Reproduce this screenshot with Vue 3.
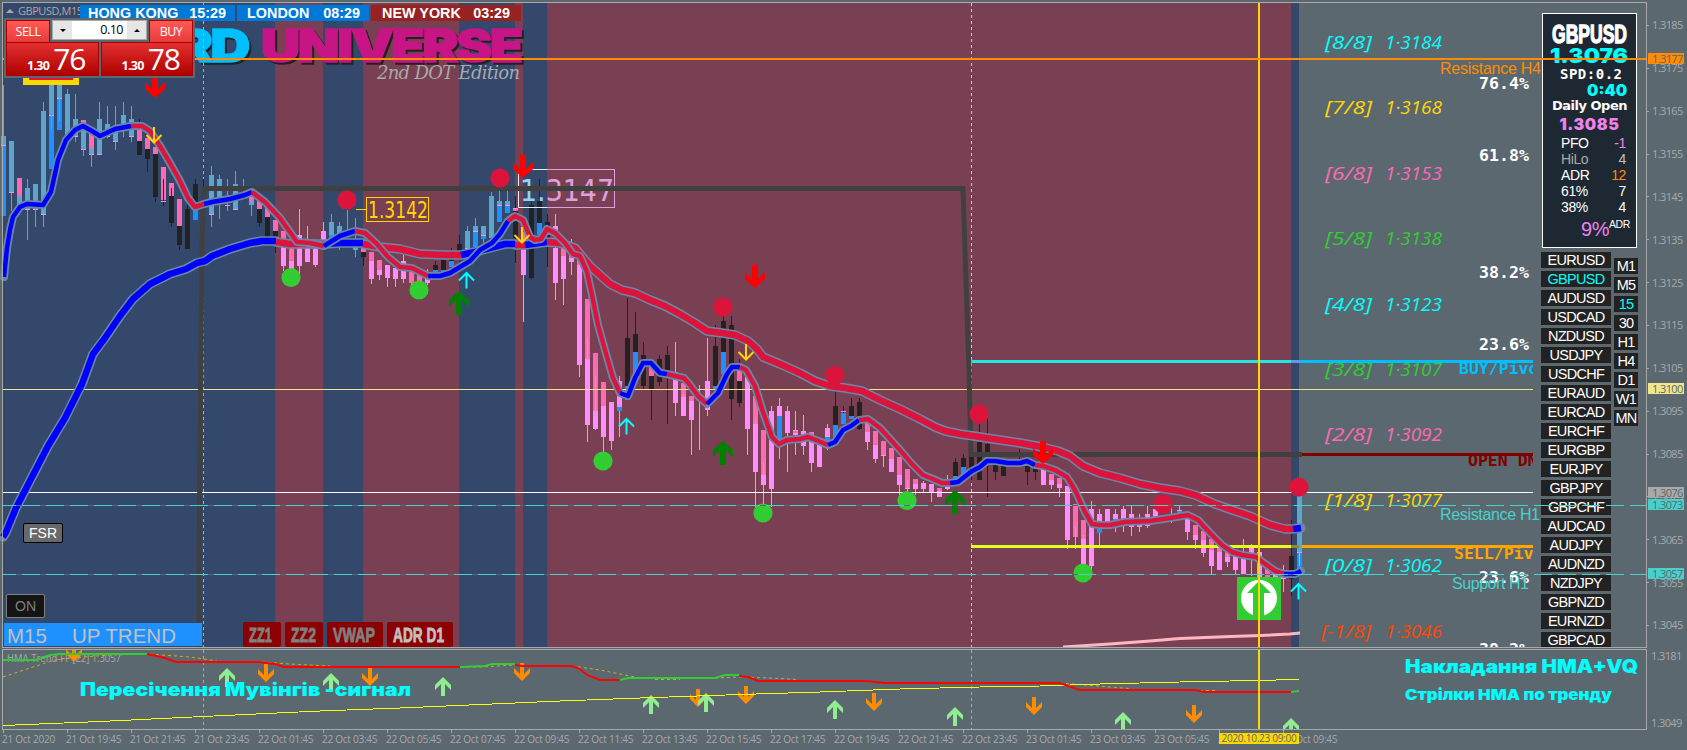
<script setup>
// candle spacing is 8px, each entry is one bar: lowercase = body, uppercase = wick
const rawCandles = `
s136-145 d145-216 v145-146 S85-136/s141-192 v192-193 S193-211/p178-196 s196-206 S206-215/S179-240 s188-209 v209-210/s184-209 v209-210 S209-227/
S102-227 s111-214 v214-215/s85-115 d115-169 v115-116 S115-130/s85-98 d98-130 v98-99 S98-121/S89-142 s94-138/S94-142 s119-136 v136-137/
p120-123 s131-149 v149-150 S149-156/p132-149 s149-154 v154-155 S154-167/S102-155 s119-154 v154-155/S106-138 s124-137 v136-137/S106-150 s132-141 v141-142/
S102-137 s115-131/S106-142 s119-136 v136-137/K119-155 p127-141 k141-155/K149-172 p138-149 k149-159/K149-202 p147-154 k154-197/
p167-200 K179-206 v201-202/p183-196 k196-223 K188-227/p199-226 k226-245 K226-250/K205-249 k209-249/K179-210 k184-204 d210-220/
K179-210/S166-227 s175-200 s206-214 v214-215/S175-219 s179-200/S179-211 v205-206/S171-210 s184-209 v209-210/
S179-195/p195-201 s201-205 S205-216/p201-209 k209-223 K209-227/p207-217 k217-237/p220-231 k231-237 K231-253/
p231-242 v242-266 V266-271/V238-275 p240-261 v261-270/V209-278 v235-266/V226-262 v240-262/v240-265 V265-267/
V222-240 v231-240/S214-240 s222-235 d235-240/S222-250 s226-235 v235-236/S210-235 d230-235/S218-257 s240-250/
K245-266 p245-252 k252-257/p252-261 v261-279 V279-284/p260-270 v270-275 V275-280/v265-278 V278-287/v268-279 V279-287/
V255-283 v261-264 v271-279/p272-283 V283-288/p275-285/V269-285 v278-283/K261-275 k265-270 d270-272/
K252-270 k260-270 d270-273/K248-270 k252-261 d261-267/K235-260 k244-251/S226-249 s231-248 v248-249/S218-247 s226-231 d231-247 v231-232/
S226-243 s226-235 d236-239 v235-236/S192-240 s196-238/S190-222 s201-205 d205-222 v205-206/S190-213 s201-205 d205-213 v205-206/K196-263 p208-211 k211-238 v208-209/
V232-322 p232-250 v250-275/K200-279 k205-278/K179-236 k201-223 d223-235/K214-267 k222-240/V214-300 v226-230 v248-283/
V240-305 p248-256 v256-279/V239-275 p250-258 v258-262/V262-377 p260-265 v265-365/p299-359 v359-425 V338-442/p353-411 v411-429 V376-430/
p382-406 v406-437 V437-455/v402-441 V441-450/V376-437 v381-407 d407-411/K298-400 k338-386 d386-400/K312-375 k334-352 d352-375/
K342-390 k355-386/p363-376 k376-389 K376-420/K355-386 k359-382/K346-424 k355-371/V342-416 v372-403/
p383-397 v397-416 V394-416/p396-401 v401-420 V401-455/V385-450/V338-416 v381-410/K325-390 k346-386 d386-390/
K315-374 k321-352 d352-374/K316-420 k325-399/K359-407 p371-381 k381-403/v377-429 V429-455/p396-424 v424-472 V419-507/
p430-475 v475-485 V462-507/V406-507 v411-489/V398-459 v406-416 d416-440/V406-472 v411-433/V411-455 v430-435 p431-433/
V415-455 v431-446/p432-440 v440-463 V463-472/v445-467/V424-450 v428-437 d437-441/K390-437 k406-425 d425-437/
K406-424 v411-412 d413-424/K398-419 k406-416 d416-419/K398-430 k402-429/p422-432 v432-442 V442-450/p431-445 v445-459 V459-463/
p441-455 v455-456 V455-467/p448-459 v459-472/p457-475 v475-485 V485-495/p469-488 v488-489 V479-492/p479-484 v484-489 V489-495/
V481-493 v483-489/v484-493 V484-502/p488-491 v491-497/V475-490 v487-489/K458-480 k462-476 d476-480/
K454-475 k458-467 d467-475/k455-470 K470-480/K424-480 k442-480/K418-497 k444-455/k463-472 K472-480/
k465-476//K449-460/K457-485 k465-472/K467-480 k467-472/
v468-485/p474-480 v480-485 V485-489/p478-484 v484-488 V488-497/v486-540 V540-549/p504-537 V526-549/
p520-539 v539-565 V535-570/V501-573 v509-566/V509-545 v514-523 d529-533/v509-523/V509-532 v514-520 d519-521/
V505-532 v509-520/V505-536 v514-527/V514-532 v524-527/V505-528 v514-526/v509-523/
V515-523/V508-523/V505-514 v510-511 d511-514/v518-532 V532-540/p525-535 v535-540 V535-549/
p531-540 v540-553 V553-557/p539-550 v550-566 V566-575/p547-552 v552-570/p552-557 v557-562 V550-567/v552-570 V570-574/
V539-575 v555-574/V544-576 v548-553/v552-577/p566-577/v574-578/
V565-592 v576-579/K520-596 k556-579/s480-552 d552-570 v552-553 V553-566`

const fills = { s: '#5fa6cc', d: '#1e90ff', k: '#222222', p: '#ff69b4', v: '#ff8cff' }
const candles = []
rawCandles.replace(/\n/g, '').split('/').forEach((bar, i) => {
  bar.split(' ').filter(Boolean).forEach(t => {
    const [a, b] = t.slice(1).split('-').map(Number)
    const wick = t[0] < 'a'
    candles.push({ x: 3 + i * 8 - (wick ? 0 : 2), y: a, w: wick ? 1 : 5, h: b - a, fill: fills[t[0].toLowerCase()] })
  })
})

const bands = [
  [3, 275, 'b'], [275, 323, 'm'], [323, 363, 'b'], [363, 459, 'm'], [459, 515, 'b'],
  [515, 523, 'm'], [523, 547, 'b'], [547, 1291, 'm'], [1291, 1299, 'b']
]

// slow and fast moving averages, split where the colour flips
const slow = [
  ['b', '3,537 6,532 16,508 32,477 48,446 65,418 82,384 93,354 105,338 120,316 133,299 150,284 170,274 186,269 197,263 205,261 212,256 230,249 250,243 262,241 276,241'],
  ['r', '276,242 290,244 325,244'], ['b', '325,244 340,243 363,243'],
  ['r', '363,244 380,247 400,249 420,254 445,255 461,255'], ['b', '461,255 475,252 490,248 505,244 515,244'],
  ['r', '515,245 525,245'], ['b', '525,245 547,242'],
  ['r', '547,242 560,243 575,248 580,254 590,266 600,275 610,284 622,290 635,293 650,300 665,306 680,314 695,323 707,331 722,333 735,335 748,341 757,349 763,357 780,364 800,373 815,381 830,386 845,388 862,391 880,400 900,409 920,419 935,427 945,431 960,434 980,437 1000,440 1020,443 1042,447 1058,451 1070,456 1083,466 1100,473 1120,478 1140,484 1160,488 1180,491 1195,495 1215,504 1232,510 1250,516 1270,525 1285,529 1293,529'],
  ['b', '1293,529 1301,528']
]
const fast = [
  ['b', '4,277 7,248 10,230 13,217 20,207 27,204 43,205 51,192 58,160 66,140 75,130 83,126 92,131 100,136 115,129 131,126'],
  ['r', '131,126 142,126 150,131 160,146 170,163 180,181 188,198 195,207 204,204'],
  ['b', '204,204 212,202 230,199 245,195 252,192'],
  ['r', '252,192 265,202 280,218 297,242 310,243 324,246'],
  ['b', '324,246 340,236 355,231'],
  ['r', '355,231 365,233 377,244 388,257 400,267 412,268 420,272 428,276'],
  ['b', '428,276 440,276 450,273 470,261 480,250 492,243 500,234 508,221'],
  ['r', '508,221 515,216 523,220 530,237 535,240 541,239 547,229 555,233 565,243 573,254 580,256 587,272 592,295 598,325 605,350 613,378 620,393'],
  ['b', '620,393 628,396 635,378 643,363 651,363 660,373 667,374'],
  ['r', '667,374 675,376 684,378 690,385 698,396 707,404'],
  ['b', '707,404 718,393 727,374 732,367 740,367'],
  ['r', '740,367 746,370 755,386 763,412 772,437 779,444 787,440 800,439 808,437 816,440 828,445'],
  ['b', '828,445 835,442 843,430 851,426 859,420'],
  ['r', '859,420 868,419 880,428 900,450 912,464 923,475 933,479 942,483 950,483'],
  ['b', '950,483 958,482 972,471 980,467 987,461 995,461 1008,463 1020,463 1027,461 1035,465'],
  ['r', '1035,465 1043,466 1055,470 1067,477 1075,490 1085,512 1092,524 1100,525 1110,525 1125,522 1150,521 1170,518 1188,515 1198,520 1210,533 1222,545 1232,552 1242,555 1256,557 1264,563 1275,571 1284,574'],
  ['b', '1284,574 1295,574 1301,571']
]
const joined = segs => segs.map(s => s[1]).join(' ')

const dots = [
  [347, 200, 'r'], [500, 178, 'r'], [723, 307, 'r'], [835, 375.5, 'r'], [979, 414, 'r'], [1163, 504, 'r'], [1299, 487, 'r'],
  [291, 277.5, 'g'], [419, 290, 'g'], [603, 461, 'g'], [763, 513, 'g'], [907, 500.5, 'g'], [1083, 573, 'g']
]

// x, y of the arrow tip
const sellArrows = [[155, 98], [523, 178], [755, 288], [1043, 464]]
const buyArrows = [[459, 291], [723, 441], [955, 490]]
const thinDown = [[154, 143], [522, 243], [746, 360]]
const thinUp = [[466.5, 272.5], [626.5, 418.5], [1298.5, 583.5]]
const subDown = [[74, 662], [266, 682], [370, 686], [522, 681], [698, 707], [746, 704], [874, 711], [1034, 715], [1194, 723]]
const subUp = [[227, 668], [331, 673], [443, 677], [651, 695], [706, 693], [835, 700], [955, 707], [1123, 712], [1291, 718]]

const murrey = [
  ['[8/8]', '1·3184', 49, '#00ffff'], ['[7/8]', '1·3168', 114, '#ffd700'], ['[6/8]', '1·3153', 180, '#ff69b4'],
  ['[5/8]', '1·3138', 245, '#32cd32'], ['[4/8]', '1·3123', 311, '#00ffff'], ['[3/8]', '1·3107', 376, '#32cd32'],
  ['[2/8]', '1·3092', 441, '#ff69b4'], ['[1/8]', '1·3077', 507, '#ffd700'], ['[0/8]', '1·3062', 572, '#00ffff'],
  ['[-1/8]', '1·3046', 638, '#ff4500']
]
const fibs = [['76.4%', 89], ['61.8%', 161], ['38.2%', 278], ['23.6%', 350], ['23.6%', 583], ['38.2%', 655]]

const sessions = [
  { city: 'HONG KONG', time: '15:29', cls: 'hk' },
  { city: 'LONDON', time: '08:29', cls: 'ldn' },
  { city: 'NEW YORK', time: '03:29', cls: 'ny' }
]
const tools = [
  { name: 'ZZ1', w: 38, t: 23 }, { name: 'ZZ2', w: 38, t: 25 },
  { name: 'VWAP', w: 56, t: 42 }, { name: 'ADR D1', w: 66, t: 51, on: true }
]
const stats = [
  ['PFO', '-1', '#fff', '#ee82ee'], ['HiLo', '4', '#a9a9a9', '#c0c0c0'], ['ADR', '12', '#fff', '#ff8c00'],
  ['61%', '7', '#fff', '#fff'], ['38%', '4', '#fff', '#fff']
]
const symbols = ['EURUSD', 'GBPUSD', 'AUDUSD', 'USDCAD', 'NZDUSD', 'USDJPY', 'USDCHF', 'EURAUD', 'EURCAD', 'EURCHF', 'EURGBP',
  'EURJPY', 'GBPJPY', 'GBPCHF', 'AUDCAD', 'AUDJPY', 'AUDNZD', 'NZDJPY', 'GBPNZD', 'EURNZD', 'GBPCAD']
const frames = ['M1', 'M5', '15', '30', 'H1', 'H4', 'D1', 'W1', 'MN']
const prices = ['1.3185', '1.3175', '1.3165', '1.3155', '1.3145', '1.3135', '1.3125', '1.3115', '1.3105', '1.3095', '1.3085', '1.3075', '1.3065', '1.3055', '1.3045']
const tags = [
  { p: '1.3177', cls: 'orange' }, { p: '1.3100', cls: 'khaki' }, { p: '1.3076', cls: 'silver' },
  { p: '1.3073', cls: 'teal1' }, { p: '1.3057', cls: 'teal2' }
]
const times = ['21 Oct 2020', '21 Oct 19:45', '21 Oct 21:45', '21 Oct 23:45', '22 Oct 01:45', '22 Oct 03:45', '22 Oct 05:45',
  '22 Oct 07:45', '22 Oct 09:45', '22 Oct 11:45', '22 Oct 13:45', '22 Oct 15:45', '22 Oct 17:45', '22 Oct 19:45', '22 Oct 21:45',
  '22 Oct 23:45', '23 Oct 01:45', '23 Oct 03:45', '23 Oct 05:45', '23 Oct 07:45', '23 Oct 09:45']
</script>

<template>
  <div class="terminal">
    <div class="upper">
      <main class="chart">
        <svg class="canvas" width="1646" height="647" viewBox="0 0 1646 647">
          <rect v-for="b in bands" :key="b[0]" :x="b[0]" y="3" :width="b[1] - b[0]" height="644" :class="'band-' + b[2]" />

          <!-- logo text -->
          <g class="logo">
            <text x="178" y="64" textLength="72" lengthAdjust="spacingAndGlyphs" class="sh">RD</text>
            <text x="263" y="64" textLength="260" lengthAdjust="spacingAndGlyphs" class="sh">UNIVERSE</text>
            <text x="176" y="62" textLength="72" lengthAdjust="spacingAndGlyphs" class="cy">RD</text>
            <text x="261" y="62" textLength="260" lengthAdjust="spacingAndGlyphs" class="mg">UNIVERSE</text>
          </g>
          <text x="377" y="79" textLength="143" class="edition">2nd DOT Edition</text>

          <path d="M203.5 3V647" class="sep plum" />
          <path d="M971.5 3V647" class="sep lime" />

          <g shape-rendering="crispEdges">
            <rect v-for="(c, i) in candles" :key="i" :x="c.x" :y="c.y" :width="c.w" :height="c.h" :fill="c.fill" />
          </g>

          <!-- price boxes -->
          <rect x="23" y="70" width="56" height="15" fill="#ffd700" />
          <rect x="29" y="70" width="44" height="10" fill="#dc143c" />
          <rect x="366.5" y="197.5" width="62" height="24" class="box gold" />
          <path d="M356 209.5H366" class="box gold" />
          <text x="368" y="218" textLength="60" lengthAdjust="spacingAndGlyphs" class="boxed gold-t">1.3142</text>
          <rect x="518.5" y="169.5" width="96" height="38" class="box plum-b" />
          <path d="M547 169.5H518.5V207.5H547" class="box pale" />
          <text x="520" y="201" textLength="94" lengthAdjust="spacingAndGlyphs" class="boxed big"><tspan fill="#8fd8e8">1.</tspan>3147</text>

          <polyline points="3,389.5 1533,389.5" stroke="#f0e68c" class="ln" />
          <polyline points="3,492.5 1533,492.5" stroke="#fff" class="ln" />

          <polyline points="971,361.5 1291,361.5" stroke="#20e8e0" stroke-width="3" />
          <polyline points="1291,361.5 1299,361.5" stroke="#6c94e0" stroke-width="3" />
          <polyline points="1299,361.5 1533,361.5" stroke="#00bfff" stroke-width="3" />
          <polyline points="971,546.5 1291,546.5" stroke="#dfff20" stroke-width="3" />
          <polyline points="1291,546.5 1299,546.5" stroke="#8a8a30" stroke-width="3" />
          <polyline points="1302,546.5 1533,546.5" stroke="#ffa500" stroke-width="3" />
          <polyline points="1302,454.5 1533,454.5" stroke="#800000" stroke-width="3" />
          <polyline points="1063,647 1110,644 1150,641 1180,638.5 1231,636.5 1260,635.5 1290,634 1300,633" class="pink" />
          <polyline points="199,647 199,562 202,240 204,188.5 963,188.5 965,250 969,370 971,454.5 1302,454.5" class="daily" />

          <polyline :points="joined(slow)" class="edge slow-edge" />
          <polyline v-for="(s, i) in slow" :key="'s' + i" :points="s[1]" :class="['ma', 'slow', 'ma-' + s[0]]" />
          <polyline :points="joined(fast)" class="edge fast-edge" />
          <polyline v-for="(s, i) in fast" :key="'f' + i" :points="s[1]" :class="['ma', 'ma-' + s[0]]" />

          <circle v-for="d in dots" :key="d[0] + '-' + d[1]" :cx="d[0]" :cy="d[1]" r="9.6" :fill="d[2] === 'r' ? '#dc143c' : '#32cd32'" />
          <path v-for="a in sellArrows" :key="'d' + a[0]" :transform="`translate(${a[0]} ${a[1]})`" d="M0 0L10-9V-16L3-9V-23H-3V-9L-10-16V-9Z" fill="#f00" />
          <path v-for="a in buyArrows" :key="'u' + a[0]" :transform="`translate(${a[0]} ${a[1]})`" d="M0 0L10 9V16L3 9V24H-3V9L-10 16V9Z" fill="#008000" />
          <path v-for="a in thinDown" :key="'t' + a[0]" :transform="`translate(${a[0]} ${a[1]})`" d="M0-16V0M-7.5-8L0-.5L7.5-8" class="thin" stroke="#ffd700" />
          <path v-for="a in thinUp" :key="'c' + a[0]" :transform="`translate(${a[0]} ${a[1]})`" d="M0 16V0M-7.5 8L0 .5L7.5 8" class="thin" stroke="#0ff" />

          <rect x="1237" y="577" width="44" height="43" fill="#32cd32" />
          <circle cx="1259" cy="598" r="18" fill="#fff" />
          <path d="M1259 581L1271 593H1264V617H1253V593H1247Z" fill="#32cd32" />

          <g class="murrey">
            <template v-for="m in murrey" :key="m[0]">
              <text :x="m[0].length > 5 ? 1321 : 1325" :y="m[2]" :fill="m[3]" :textLength="m[0].length > 5 ? 50 : 47" lengthAdjust="spacingAndGlyphs">{{ m[0] }}</text>
              <text x="1385" :y="m[2]" :fill="m[3]" textLength="57" lengthAdjust="spacingAndGlyphs">{{ m[1] }}</text>
            </template>
          </g>
          <text v-for="f in fibs" :key="f[1]" x="1479" :y="f[1]" textLength="50" class="mono" fill="#fff">{{ f[0] }}</text>

          <svg x="1440" y="0" width="93" height="647" viewBox="1440 0 93 647">
            <text x="1459" y="374" class="mono" fill="#00bfff">BUY/Pivot</text>
            <text x="1468" y="466" class="mono" fill="#800000">OPEN DN</text>
            <text x="1454" y="559" class="mono" fill="#ffa500">SELL/Pivot</text>
          </svg>
          <text x="1440" y="74" textLength="101" class="zone" fill="#ff8c00">Resistance H4</text>
          <text x="1440" y="520" textLength="100" class="zone" fill="#48d1cc">Resistance H1</text>
          <text x="1452" y="589" textLength="77" class="zone" fill="#48d1cc">Support H1</text>
          <path d="M1259 3V647" class="cursor" />
        </svg>

        <div class="caption"><i></i>GBPUSD,M15</div>
        <div class="sessions">
          <div v-for="s in sessions" :key="s.city" :class="s.cls"><span>{{ s.city }}</span><span>{{ s.time }}</span></div>
        </div>

        <aside class="info">
          <svg width="93" height="62" viewBox="0 0 93 62">
            <text x="9" y="29" textLength="75" lengthAdjust="spacingAndGlyphs" class="pair">GBPUSD</text>
            <text x="7" y="49" textLength="78" lengthAdjust="spacingAndGlyphs" class="quote">1.3076</text>
          </svg>
          <div class="spd">SPD:0.2</div>
          <div class="timer">0:40</div>
          <div class="open">Daily Open</div>
          <div class="openval">1.3085</div>
          <div v-for="s in stats" :key="s[0]" class="stat">
            <span :style="{ color: s[2] }">{{ s[0] }}</span><span :style="{ color: s[3] }">{{ s[1] }}</span>
          </div>
          <div class="adr">9%<sup>ADR</sup></div>
        </aside>

        <div class="lists">
          <ul class="symbols">
            <li v-for="s in symbols" :key="s" :class="{ active: s === 'GBPUSD' }">{{ s }}</li>
          </ul>
          <ul class="frames">
            <li v-for="f in frames" :key="f" :class="{ active: f === '15' }">{{ f }}</li>
          </ul>
        </div>

        <svg class="canvas" width="1646" height="647" viewBox="0 0 1646 647">
          <path d="M3 59H1646" stroke="#ff8c00" stroke-width="2" />
          <path d="M3 505.5H1300M3 574.5H1300" stroke="#5b6870" />
          <path d="M3 505.5H1646M3 574.5H1646" stroke="#48d1cc" stroke-dasharray="18 6" stroke-dashoffset="5" />
        </svg>

        <div class="trade">
          <div class="top">
            <button class="side">SELL</button>
            <div class="lot"><b class="dn"></b><span>0.10</span><b class="up"></b></div>
            <button class="side">BUY</button>
          </div>
          <div class="quotes">
            <div class="q"><small>1.30</small><em>76</em></div>
            <div class="q"><small>1.30</small><em>78</em></div>
          </div>
        </div>

        <button class="fsr">FSR</button>
        <button class="on">ON</button>
        <div class="trend"><span>M15</span><span>UP TREND</span></div>
        <div class="tools">
          <svg v-for="t in tools" :key="t.name" :width="t.w" height="25" :class="{ on: t.on }">
            <rect :width="t.w" height="25" rx="2" />
            <text x="6" y="20" :textLength="t.t" lengthAdjust="spacingAndGlyphs">{{ t.name }}</text>
          </svg>
        </div>
      </main>

      <div class="prices">
        <div v-for="p in prices" :key="p" class="price"><span>{{ p }}</span></div>
        <div v-for="t in tags" :key="t.p" :class="['tag', t.cls]"><span>{{ t.p }}</span></div>
      </div>
    </div>

    <div class="lower">
      <section class="sub">
        <svg class="canvas" width="1646" height="80" viewBox="0 649 1646 80">
          <text x="7" y="662" textLength="114" lengthAdjust="spacingAndGlyphs" class="hma">HMA-Trend-FF [22] 1.3057</text>
          <path d="M203.5 650V729M971.5 650V729" class="sep grey" />
          <path v-for="a in subDown" :key="'d' + a[0]" :transform="`translate(${a[0]} ${a[1]})`" d="M0 0L8-8V-13L2-7V-18H-2V-7L-8-13V-8Z" fill="#ff8c00" />
          <path v-for="a in subUp" :key="'u' + a[0]" :transform="`translate(${a[0]} ${a[1]})`" d="M0 0L8 8V13L2 7V19H-2V7L-8 13V8Z" fill="#90ee90" />
          <g class="dashes">
            <polyline points="3,677 30,668 55,660 70,658 110,655 147,654 190,657 217,661" />
            <polyline points="262,662 290,664 330,666" />
            <polyline points="455,667 480,667 515,665" />
            <polyline points="572,666 600,670 635,677" />
            <polyline points="655,679.5 680,679.5" />
            <polyline points="715,678 740,677 770,678 798,679.5" />
            <polyline points="1060,683 1085,685 1110,687 1130,688.5" />
            <polyline points="1200,690.5 1216,690.5" />
          </g>
          <polyline points="3,725.5 100,721.5 203,716.5 320,711 400,708 515,703 560,701 640,698 740,694.5 820,692 900,689 980,687 1040,686 1100,684 1200,681.5 1230,681 1299,679.5" stroke="#ff0" class="ln" />
          <polyline points="3,660 36,660 50,655 60,654 147,654" class="hg" />
          <polyline points="147,654 165,658 176,662 258,662 275,664 284,667 460,667" class="hr" />
          <polyline points="460,667 485,666 492,664 515,664" class="hg" />
          <polyline points="515,665 522,666 572,666 580,669 587,675 600,680 620,680" class="hr" />
          <polyline points="620,680 628,678 715,678 725,675 739,675" class="hg" />
          <polyline points="739,676 748,677 758,681 867,681 884,683 1060,683 1068,686 1080,690 1195,690 1204,692 1291,692" class="hr" />
          <polyline points="1291,692 1299,691" class="hg" />
          <text x="80" y="696" textLength="331" lengthAdjust="spacingAndGlyphs" class="note">Пересічення Мувінгів -сигнал</text>
          <text x="1405" y="672.5" textLength="233" lengthAdjust="spacingAndGlyphs" class="note">Накладання HMA+VQ</text>
          <text x="1405" y="700" textLength="207" lengthAdjust="spacingAndGlyphs" class="note small">Стрілки HMA по тренду</text>
          <path d="M1259 649V729" class="cursor" />
        </svg>
      </section>
      <div class="range"><span>1.3181</span><span>1.3049</span></div>
    </div>

    <footer class="times">
      <div v-for="t in times" :key="t">{{ t }}</div>
      <strong>2020.10.23 09:00</strong>
    </footer>
  </div>
</template>

<style>
body {
  margin: 0;
  background: #5b6870;
}
</style>

<style scoped>
.terminal {
  width: 1687px;
  height: 750px;
  overflow: hidden;
  background: #5b6870;
  color: #a9a9a9;
  font-family: "Liberation Sans", Arial, sans-serif;
}
.upper, .lower {
  display: flex;
}
.chart {
  position: relative;
  box-sizing: border-box;
  width: 1647px;
  height: 648px;
  overflow: hidden;
}
/* frame */
.chart::after {
  content: "";
  position: absolute;
  left: 2px;
  top: 2px;
  right: 0;
  bottom: 0;
  border: 1px solid #a9a9a9;
  pointer-events: none;
}
.canvas {
  position: absolute;
  left: 0;
  top: 0;
}
.band-b { fill: #34486c; }
.band-m { fill: #784052; }

.logo text {
  font: 900 46px Inter, sans-serif;
  letter-spacing: -2px;
  stroke-width: 1.5;
}
.logo .sh { fill: #222; stroke: #222; }
.logo .cy { fill: #00bfff; stroke: #00bfff; }
.logo .mg { fill: #c71585; stroke: #c71585; }
.edition {
  font: italic 18px "DejaVu Serif", serif;
  fill: #a9a9a9;
}
.sep { stroke-dasharray: 3 3; fill: none; }
.plum { stroke: #da8fd0; }
.lime { stroke: #90ee90; }
.grey { stroke: #a9a9a9; }
.box { fill: none; stroke-width: 1; }
.gold { stroke: #ffd700; }
.plum-b { stroke: #dda0dd; }
.pale { stroke: #e0f0f8; }
.boxed {
  font: 23px "DejaVu Sans", sans-serif;
}
.gold-t { fill: #ffd700; }
.big { font-size: 31px; fill: #dda0dd; }
.ln { fill: none; stroke-width: 1; shape-rendering: crispEdges; }
.pink { fill: none; stroke: #ffb6c1; stroke-width: 3; }
.daily { fill: none; stroke: #404040; stroke-width: 5; }
.edge, .ma { fill: none; stroke-linejoin: round; }
.edge { stroke: #6b87a8; stroke-linecap: round; }
.slow-edge { stroke-width: 9.5; }
.fast-edge { stroke-width: 8; }
.ma { stroke-width: 4.5; }
.slow { stroke-width: 6.5; }
.ma-b { stroke: #0000ff; }
.ma-r { stroke: #dc143c; }
.thin { fill: none; stroke-width: 2; }
.murrey text {
  font: italic 400 18px "Open Sans", sans-serif;
}
.mono {
  font: bold 16.5px "DejaVu Sans Mono", monospace;
}
.zone { font-size: 16px; }
.cursor { stroke: #ffd700; stroke-width: 2; }

.caption {
  position: absolute;
  left: 6px;
  top: 4px;
  display: flex;
  align-items: center;
  gap: 4px;
  font: 11px/14px "Open Sans", sans-serif;
  letter-spacing: -0.45px;
}
.caption i {
  border: 4px solid transparent;
  border-top: 0;
  border-bottom-color: #a9a9a9;
}
.sessions {
  position: absolute;
  left: 80px;
  top: 5px;
  display: flex;
  gap: 2px;
  color: #fff;
  font: bold 14.4px/17px "Liberation Sans", sans-serif;
}
.sessions div {
  display: flex;
  justify-content: space-between;
  box-sizing: border-box;
  height: 16px;
  padding: 0 9px 0 8px;
  white-space: nowrap;
}
.hk { width: 155px; background: #0078d7; }
.ldn { width: 132px; background: #0078d7; }
.ny { width: 150px; background: #962222; }
.sessions .ldn { padding-left: 10px; }
.sessions .ny { padding: 0 11px; }

/* one click trading */
.trade {
  position: absolute;
  left: 4px;
  top: 18px;
  box-sizing: border-box;
  width: 191px;
  height: 60px;
  padding: 2px;
  background: #5b6870;
}
.top {
  display: flex;
  justify-content: space-between;
  height: 22px;
}
.side {
  width: 44px;
  height: 23px;
  padding: 0;
  border: 1px solid #a80000;
  border-bottom: 0;
  background: linear-gradient(#ff5a55, #e63a38);
  color: #fff;
  font: 12.5px/20px "Open Sans", sans-serif;
  letter-spacing: -0.5px;
}
.lot {
  display: flex;
  width: 95px;
  height: 20px;
  box-sizing: border-box;
  border: 1px solid #a9a9a9;
  background: #fff;
}
.lot b {
  display: grid;
  place-items: center;
  width: 19px;
  background: #e6e6e6;
}
.lot b::after {
  content: "";
  border: 3px solid transparent;
}
.lot .dn::after { border-top-color: #000; border-bottom: 0; }
.lot .up::after { border-bottom-color: #000; border-top: 0; }
.lot span {
  flex: 1;
  padding-right: 4px;
  color: #000;
  text-align: right;
  font: 12.5px/18px "Open Sans", sans-serif;
  letter-spacing: -0.5px;
}
.quotes {
  display: flex;
  gap: 2px;
}
.q {
  display: flex;
  align-items: baseline;
  justify-content: flex-end;
  gap: 4px;
  flex: 1;
  box-sizing: border-box;
  height: 34px;
  padding-right: 12px;
  border: 1px solid #a80000;
  background: linear-gradient(#e23030, #b00000);
  color: #fff;
  font-family: "Open Sans", sans-serif;
}
.q small {
  font-size: 12.5px;
  font-weight: 700;
  letter-spacing: -0.7px;
}
.q em {
  font: 400 30px/32px "Open Sans", sans-serif;
  letter-spacing: -1px;
}

.fsr, .on {
  box-sizing: border-box;
  padding: 0;
  font: 14px/18px "Liberation Sans", sans-serif;
}
.fsr {
  position: absolute;
  left: 23px;
  top: 523px;
  width: 40px;
  height: 20px;
  border: 1px solid #000;
  border-radius: 2px;
  background: #696969;
  color: #fff;
}
button.on {
  position: absolute;
  left: 6px;
  top: 594px;
  width: 39px;
  height: 24px;
  border: 1px solid #808080;
  border-radius: 2px;
  background: #141414;
  color: #808080;
}
.trend {
  position: absolute;
  left: 4px;
  top: 623px;
  display: flex;
  gap: 25px;
  box-sizing: border-box;
  width: 198px;
  height: 23px;
  padding-left: 3px;
  background: #1e90ff;
  color: #c0c0c0;
  font-size: 20.5px;
  line-height: 25px;
  white-space: nowrap;
}
.tools {
  position: absolute;
  left: 243px;
  top: 622px;
  display: flex;
  gap: 4px;
}
.tools rect { fill: #8b0000; }
.tools text {
  font: bold 20px "Liberation Sans", sans-serif;
  fill: #808080;
  stroke: #808080;
  stroke-width: 0.8;
}
.tools .on text { fill: #c0c0c0; stroke: #c0c0c0; }

.info {
  position: absolute;
  left: 1542px;
  top: 13px;
  box-sizing: border-box;
  width: 95px;
  height: 235px;
  border: 1px solid #fff;
  background: #1e2832;
  color: #fff;
}
.info svg {
  display: block;
  margin-bottom: -10px;
}
.pair {
  font: bold 25px "Liberation Sans", sans-serif;
  fill: #fff;
  stroke: #fff;
  stroke-width: 1.3;
}
.quote {
  font: 900 20px Inter, sans-serif;
  fill: #0ff;
}
.spd {
  padding-left: 17px;
  font: bold 14px/17px "DejaVu Sans Mono", monospace;
  letter-spacing: 0.5px;
}
.timer {
  padding-right: 9px;
  color: #0ff;
  text-align: right;
  font: 900 16px/14px Inter, sans-serif;
}
.open {
  display: flex;
  justify-content: center;
  font: bold 13px/17px "DejaVu Sans", sans-serif;
  letter-spacing: -0.5px;
  white-space: nowrap;
}
.openval {
  color: #ee82ee;
  text-align: center;
  font: 900 16px/20px Inter, sans-serif;
  letter-spacing: 0.6px;
}
.stat {
  display: flex;
  justify-content: space-between;
  padding: 0 10px 0 18px;
  font-size: 14px;
  line-height: 16px;
  letter-spacing: -0.4px;
}
.info .openval + .stat { margin-top: 1px; }
.adr {
  display: flex;
  justify-content: flex-end;
  padding: 2px 6px 0 0;
  color: #ee82ee;
  font-size: 20px;
  line-height: 25px;
  letter-spacing: -0.4px;
}
.adr sup {
  color: #fff;
  font-size: 10.5px;
  line-height: 14px;
}

.lists {
  position: absolute;
  left: 1541px;
  top: 252px;
  display: flex;
  gap: 3px;
}
.lists ul {
  display: flex;
  flex-direction: column;
  gap: 3px;
  margin: 0;
  padding: 0;
  list-style: none;
}
.lists li {
  height: 16px;
  background: #222;
  color: #fff;
  text-align: center;
  font-size: 14.5px;
  line-height: 17px;
  letter-spacing: -0.7px;
}
.symbols { width: 70px; }
.lists .frames { width: 24px; margin-top: 6px; }
.frames li { white-space: nowrap; }
.lists .active { color: #0ff; }

.prices {
  position: relative;
  width: 40px;
  height: 648px;
  padding-top: 4px;
  box-sizing: border-box;
  font: 500 11px/14px "Open Sans", sans-serif;
  letter-spacing: -0.6px;
}
.price {
  display: flex;
  align-items: center;
  gap: 3px;
  height: 42.86px;
}
.price::before {
  content: "";
  width: 2px;
  height: 1px;
  background: #a9a9a9;
}
.tag {
  position: absolute;
  left: 1px;
  width: 36px;
  height: 11px;
  color: #5b6870;
  line-height: 11px;
  text-indent: 4px;
}
.orange { top: 53px; background: #ff8c00; }
.khaki { top: 383px; background: #f0e68c; }
.silver { top: 487px; background: #a9a9a9; }
.teal1 { top: 499px; background: #48d1cc; }
.teal2 { top: 568px; background: #48d1cc; }

.lower { margin-top: 1px; }
.sub {
  position: relative;
  box-sizing: border-box;
  width: 1647px;
  height: 81px;
}
.sub::after {
  content: "";
  position: absolute;
  left: 2px;
  top: 0;
  right: 0;
  bottom: 0;
  border: 1px solid #a9a9a9;
}
.hma {
  font: 10.5px "Open Sans", sans-serif;
  fill: #a9a9a9;
}
.dashes polyline {
  fill: none;
  stroke: #daa520;
  stroke-dasharray: 3 3;
}
.hg, .hr { fill: none; stroke-width: 2; }
.hg { stroke: #32cd32; }
.hr { stroke: #f00; }
.note {
  font: 900 18.5px Inter, sans-serif;
  fill: #0ff;
}
.small { font-size: 15px; }
.range {
  display: flex;
  flex-direction: column;
  justify-content: space-between;
  padding-left: 4px;
  font: 500 11px/14px "Open Sans", sans-serif;
  letter-spacing: -0.6px;
}
.times {
  position: relative;
  display: flex;
  padding-left: 3px;
  font: 500 10px/18px "Open Sans", sans-serif;
  letter-spacing: -0.25px;
}
.times div {
  flex: 0 0 64px;
  white-space: nowrap;
  text-indent: -1px;
  background: linear-gradient(#a9a9a9, #a9a9a9) 0 0 / 1px 3px no-repeat;
}
.times strong {
  position: absolute;
  left: 1219px;
  top: 3px;
  width: 80px;
  height: 11px;
  background: #ffd700;
  color: #5b6870;
  text-align: center;
  font-weight: 500;
  line-height: 11px;
}
</style>
